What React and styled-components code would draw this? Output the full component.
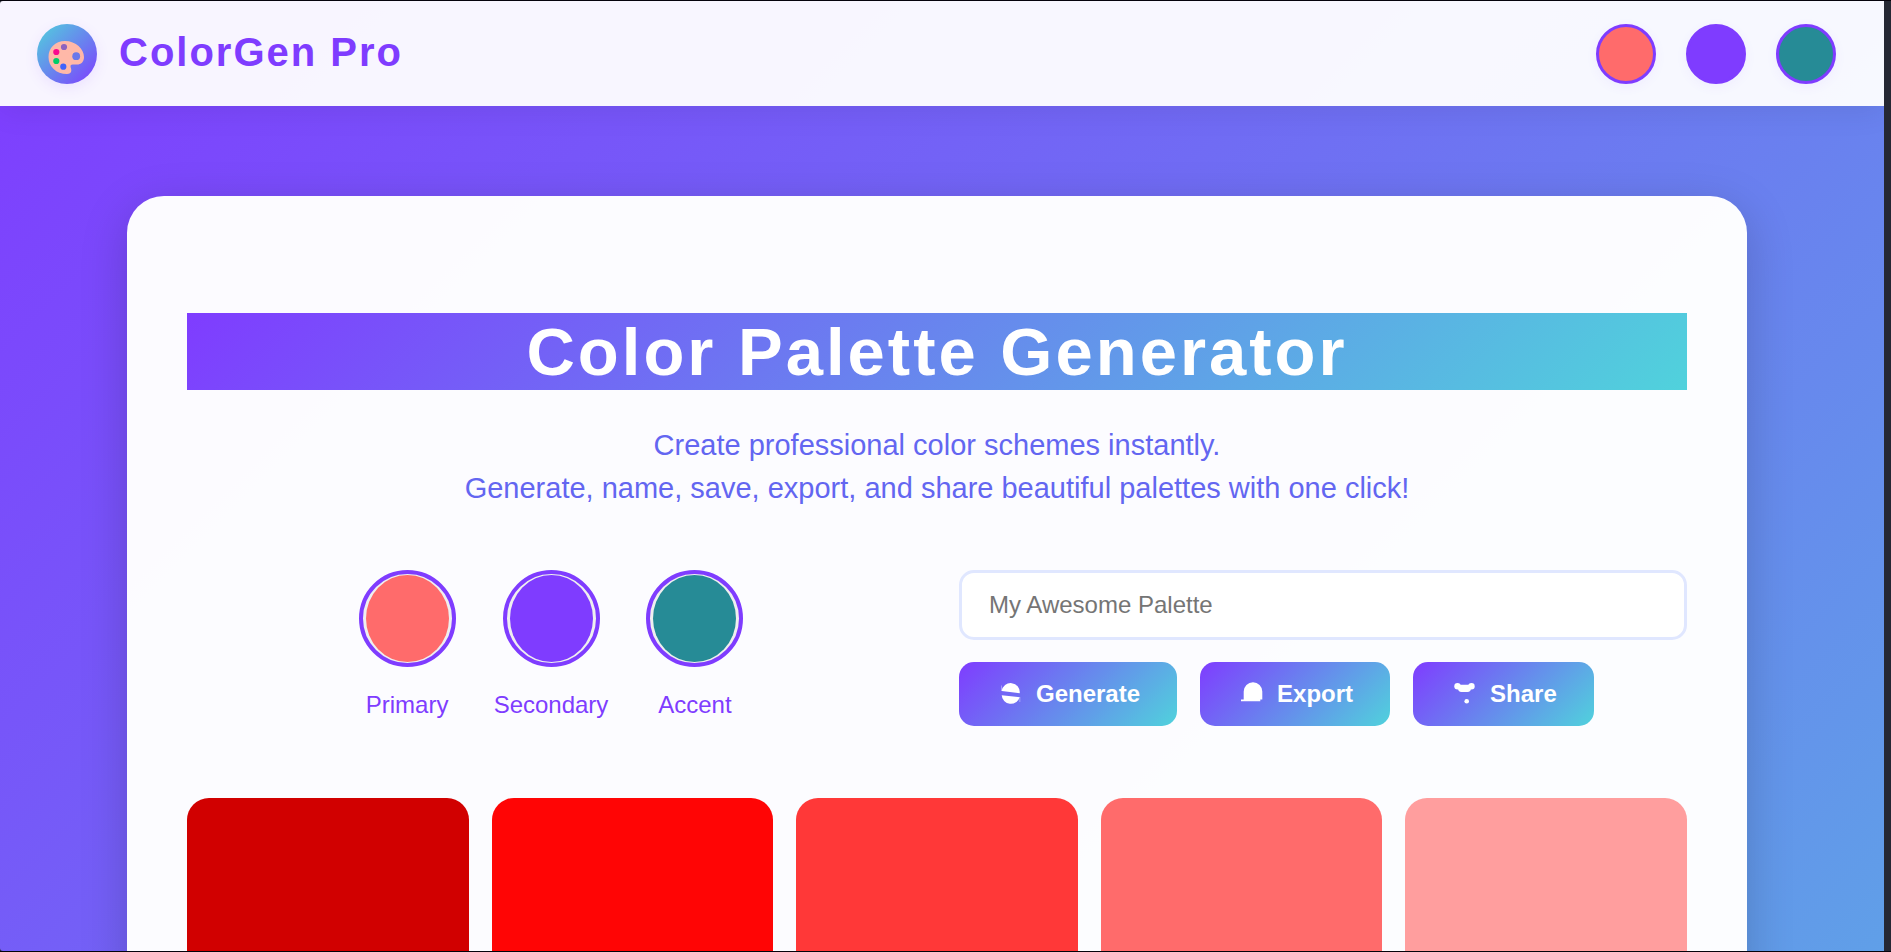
import React, { useState } from "react";
import styled, { createGlobalStyle, ThemeProvider } from "styled-components";

const theme = {
  violet: "#7f3cff",
  indigo: "#6366f1",
  cyan: "#50d2dc",
  coral: "#ff6b6b",
  teal: "#268b96",
};

const GlobalStyle = createGlobalStyle`
  *, *::before, *::after { box-sizing: border-box; }
  html, body { margin: 0; background: #000; }
  body, button, input {
    font-family: "Liberation Sans", Arial, sans-serif;
  }
`;

const Frame = styled.div`
  display: flex;
  height: 100vh;
  border: solid #05030c;
  border-width: 1px 0;
  background: #252834;
`;

const Page = styled.div`
  flex: 1;
  min-width: 0;
  overflow-y: auto;
  scrollbar-width: none;
  border-radius: 3px 0 0 3px;
`;

const ScrollTrack = styled.div`
  flex: none;
  width: 7px;
  background: #252834;
`;

const Backdrop = styled.div`
  padding-bottom: 90px;
  background: linear-gradient(135deg, ${({ theme }) => theme.violet}, ${({ theme }) => theme.cyan}) 0 0 / 100% 2400px;
`;

const Header = styled.header`
  position: relative;
  display: flex;
  align-items: center;
  justify-content: space-between;
  height: 105px;
  padding: 0 48px 0 37px;
  background: rgba(255, 255, 255, 0.95);
  box-shadow: 0 4px 30px rgba(0, 0, 0, 0.08);
`;

const Brand = styled.div`
  display: flex;
  align-items: center;
  gap: 22px;
`;

const BrandMark = styled.svg`
  width: 60px;
  height: 60px;
  border-radius: 50%;
  background: linear-gradient(135deg, ${({ theme }) => theme.cyan}, ${({ theme }) => theme.violet});
  box-shadow: 0 4px 14px rgba(127, 60, 255, 0.1);
`;

const BrandName = styled.span`
  padding-bottom: 2px;
  color: ${({ theme }) => theme.violet};
  font-size: 40px;
  font-weight: 700;
  letter-spacing: 2px;
`;

const QuickColors = styled.div`
  display: flex;
  gap: 30px;
`;

const QuickColor = styled.button`
  width: 60px;
  height: 60px;
  padding: 0;
  border: 3px solid ${({ theme }) => theme.violet};
  border-radius: 50%;
  background: ${({ $color }) => $color};
  box-shadow: 0 3px 12px rgba(127, 60, 255, 0.06);
  cursor: pointer;
`;

const Card = styled.main`
  max-width: 1620px;
  margin: 90px auto 0;
  padding: 117px 60px 60px;
  border-radius: 37px;
  background: rgba(255, 255, 255, 0.98);
  box-shadow: 0 12px 48px rgba(0, 0, 0, 0.18);
`;

const Content = styled.div`
  padding-right: 10px;
`;

const Title = styled.h1`
  margin: 0;
  background: linear-gradient(135deg, ${({ theme }) => theme.violet}, ${({ theme }) => theme.cyan});
  color: #fff;
  font-size: 67px;
  line-height: 77px;
  letter-spacing: 3px;
  text-align: center;
`;

const Lead = styled.p`
  margin: 34px 0 0;
  color: ${({ theme }) => theme.indigo};
  font-size: 29px;
  line-height: 43px;
  text-align: center;
`;

const Controls = styled.section`
  display: grid;
  grid-template-columns: 1fr 1fr;
  gap: 44px;
  margin-top: 60px;
`;

const Pickers = styled.div`
  display: flex;
  justify-content: center;
  gap: 38px;
`;

const Picker = styled.label`
  display: flex;
  flex-direction: column;
  align-items: center;
  gap: 23px;
  color: ${({ theme }) => theme.violet};
  font-size: 24px;
  line-height: 30px;
`;

const ColorInput = styled.input`
  width: 97px;
  height: 97px;
  padding: 1px 3px;
  border: 4px solid ${({ theme }) => theme.violet};
  border-radius: 50%;
  background: #efefef;
  cursor: pointer;

  &::-webkit-color-swatch-wrapper { padding: 0; }
  &::-webkit-color-swatch { border: 0; border-radius: 50%; }
`;

const Actions = styled.div`
  display: flex;
  flex-direction: column;
  gap: 22px;
`;

const NameInput = styled.input`
  width: 100%;
  height: 70px;
  padding: 0 27px;
  border: 3px solid #e0e7ff;
  border-radius: 15px;
  background: #fff;
  color: #333;
  font-size: 24px;

  &::placeholder { color: #757575; }
`;

const ButtonRow = styled.div`
  display: flex;
  flex-wrap: wrap;
  gap: 23px;
`;

const ActionButton = styled.button`
  display: flex;
  align-items: center;
  gap: 9px;
  height: 64px;
  padding: 0 37px 0 38px;
  border: 0;
  border-radius: 15px;
  background: linear-gradient(135deg, ${({ theme }) => theme.violet}, ${({ theme }) => theme.cyan});
  color: #fff;
  font-size: 24px;
  font-weight: 700;
  cursor: pointer;
`;

const ActionIcon = styled.svg`
  width: 30px;
  height: 30px;
  fill: #fff;
`;

const Palette = styled.section`
  display: grid;
  grid-template-columns: repeat(5, 1fr);
  gap: 23px;
  margin-top: 72px;
`;

const Shade = styled.div`
  height: 300px;
  border-radius: 22px;
  background: ${({ $color }) => $color};
`;

const shades = ["#d10000", "#ff0505", "#ff3838", "#ff6b6b", "#ff9e9e"];

const initialColors = [
  { name: "Primary", value: theme.coral },
  { name: "Secondary", value: theme.violet },
  { name: "Accent", value: theme.teal },
];

function PaletteMark() {
  return (
    <BrandMark viewBox="0 0 60 60" aria-hidden="true">
      <path
        fill="#ffb8a8"
        d="M28 17C39 17 47 25 47 33C47 38 44 40.500 40 40.500C37 40.500 33.500 40 33.500 42C33.500 43.500 34.500 45 34.300 47C34 49 32.500 50 30 50C19 50 11.500 42.500 11.500 33C11.500 24 18 17 28 17Z"
      />
      <circle cx="27" cy="23" r="3.100" fill="#8d63bf" />
      <circle cx="19.300" cy="28" r="3.100" fill="#fb0a8e" />
      <circle cx="19.300" cy="37" r="3.100" fill="#00cd68" />
      <circle cx="26.300" cy="42.700" r="3.100" fill="#4062fb" />
      <circle cx="39.200" cy="32.200" r="3.900" fill="#6a78ea" />
    </BrandMark>
  );
}

const actions = [
  {
    label: "Generate",
    icon: (
      <>
        <path d="M4.700 12.100A9 9 0 0 1 22.700 14.200Z" />
        <path d="M4.700 16.200L22.700 18.300A9.200 9.200 0 0 1 4.700 16.200Z" />
        <path d="M4.200 6.500h.6v5.500h-.6zM22.600 18h.6v5h-.6z" opacity="0.6" />
      </>
    ),
  },
  {
    label: "Export",
    icon: (
      <path d="M5.700 12.500a9.300 9.300 0 0 1 18.600 0V20.500H22.300V22.300H3V20.500H5.700Z" />
    ),
  },
  {
    label: "Share",
    icon: (
      <>
        <circle cx="6.500" cy="7.300" r="3.200" />
        <circle cx="20.500" cy="7.300" r="3.200" />
        <path d="M7 5.700H20V9.500A3.500 3.500 0 0 1 16.500 12.900H10.500A3.500 3.500 0 0 1 7 9.500Z" />
        <circle cx="15.700" cy="22.300" r="2.300" />
      </>
    ),
  },
];

export default function App() {
  const [colors, setColors] = useState(initialColors);
  const [name, setName] = useState("");

  const changeColor = (index, value) =>
    setColors(colors.map((c, i) => (i === index ? { ...c, value } : c)));

  return (
    <ThemeProvider theme={theme}>
      <GlobalStyle />
      <Frame>
        <Page>
          <Backdrop>
            <Header>
              <Brand>
                <PaletteMark />
                <BrandName>ColorGen Pro</BrandName>
              </Brand>
              <QuickColors>
                {colors.map((c) => (
                  <QuickColor key={c.name} type="button" aria-label={c.name} $color={c.value} />
                ))}
              </QuickColors>
            </Header>
            <Content>
              <Card>
                <Title>Color Palette Generator</Title>
                <Lead>
                  Create professional color schemes instantly.
                  <br />
                  Generate, name, save, export, and share beautiful palettes with one click!
                </Lead>
                <Controls>
                  <Pickers>
                    {colors.map((c, i) => (
                      <Picker key={c.name}>
                        <ColorInput
                          type="color"
                          value={c.value}
                          onChange={(e) => changeColor(i, e.target.value)}
                        />
                        {c.name}
                      </Picker>
                    ))}
                  </Pickers>
                  <Actions>
                    <NameInput
                      type="text"
                      aria-label="Palette name"
                      placeholder="My Awesome Palette"
                      value={name}
                      onChange={(e) => setName(e.target.value)}
                    />
                    <ButtonRow>
                      {actions.map((a) => (
                        <ActionButton key={a.label} type="button">
                          <ActionIcon viewBox="0 0 30 30" aria-hidden="true">
                            {a.icon}
                          </ActionIcon>
                          {a.label}
                        </ActionButton>
                      ))}
                    </ButtonRow>
                  </Actions>
                </Controls>
                <Palette aria-label="Generated shades">
                  {shades.map((s) => (
                    <Shade key={s} $color={s} />
                  ))}
                </Palette>
              </Card>
            </Content>
          </Backdrop>
        </Page>
        <ScrollTrack />
      </Frame>
    </ThemeProvider>
  );
}
